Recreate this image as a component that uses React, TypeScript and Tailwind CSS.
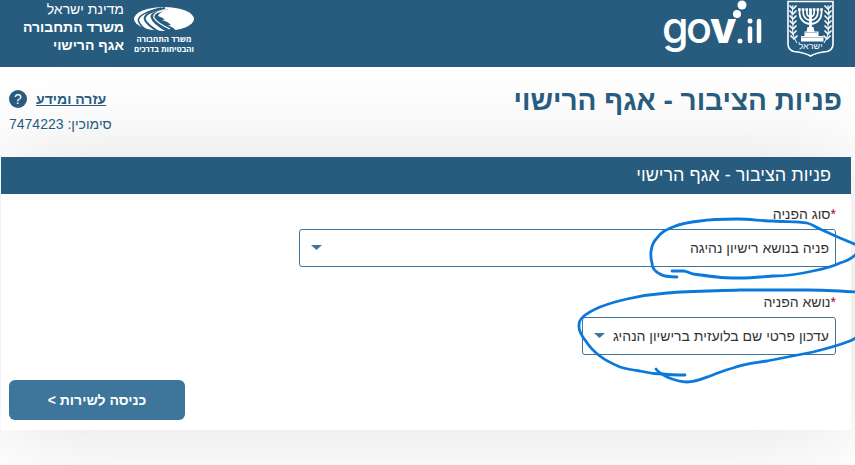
import { useState } from 'react';

type FieldProps = {
  id: string;
  label: string;
  options: string[];
  width: string;
};

function SelectField({ id, label, options, width }: FieldProps) {
  const [value, setValue] = useState(options[0]);

  return (
    <div className={`${width} max-w-full`}>
      <label htmlFor={id} className="block text-sm leading-5 text-[#333] mb-[5px]">
        <span className="text-[#b00020]">*</span>
        {label}
      </label>
      <div className="relative">
        <select
          id={id}
          value={value}
          onChange={(e) => setValue(e.target.value)}
          className="block w-full h-[38px] appearance-none rounded-[3px] border border-[#3d759b] bg-white ps-[6px] pe-7 text-sm text-[#333]"
        >
          {options.map((o) => (
            <option key={o}>{o}</option>
          ))}
        </select>
        <svg className="pointer-events-none absolute left-3 top-4 w-[11px] h-[5px] fill-[#3d759b]" viewBox="0 0 11 5">
          <path d="M0 0h11L5.5 5z" />
        </svg>
      </div>
    </div>
  );
}

function StateEmblem() {
  return (
    <svg className="w-[47px] h-[57px]" viewBox="0 0 47 57" fill="none" stroke="#fff" role="img" aria-label="סמל מדינת ישראל">
      <path d="M1 1.500H46V44Q46 50 40 51.500Q28 53 23.500 56Q19 53 7 51.500Q1 50 1 44Z" strokeWidth="1.600" />
      {/* menorah branches */}
      <g strokeWidth="1.700">
        <path d="M12.500 10V13a11 11 0 0 0 22 0V10" />
        <path d="M16.200 10V13a7.300 7.300 0 0 0 14.600 0V10" />
        <path d="M19.900 10V13a3.600 3.600 0 0 0 7.200 0V10" />
        <path d="M11 9.500H36" strokeWidth="2.400" strokeDasharray="2.700 1" />
      </g>
      <path d="M23.500 9V33" strokeWidth="2.800" />
      <path d="M20.500 27h6l1 4.500h4v4.500h5v5.500H14v-5.500h3.500v-4.500h2z" fill="#fff" stroke="none" />
      <path d="M14 37.500h22M18 32.500h12" stroke="#285c7f" strokeWidth=".4" />
      {/* olive branches */}
      <g strokeWidth="1">
        <path d="M10 43Q4 34 6 25Q4 16 6 5M37 43Q43 34 41 25Q43 16 41 5" />
        <path
          d="M6 9l-3-3M6 9l3-3M6 14l-3-3M6 14l3-3M6 19l-3-3M6 19l3-3M6 24l-3-3M6 24l3-3M6 29l-3-3M6 29l3-3M6 34l-3-3M6 34l3-3M7 39l-3-3M7 39l3-3M41 9l-3-3M41 9l3-3M41 14l-3-3M41 14l3-3M41 19l-3-3M41 19l3-3M41 24l-3-3M41 24l3-3M41 29l-3-3M41 29l3-3M41 34l-3-3M41 34l3-3M40 39l-3-3M40 39l3-3"
          strokeWidth="1.700"
          strokeLinecap="round"
        />
      </g>
      <text x="23.500" y="49" textAnchor="middle" fill="#fff" stroke="none" className="font-['Liberation_Sans'] text-[9px]">
        ישראל
      </text>
    </svg>
  );
}

function GovLogo() {
  return (
    <svg className="w-[100px] h-[57px]" viewBox="0 0 100 57" fill="#fff" direction="ltr" role="img" aria-label="gov.il">
      <text y="43" className="font-[Inter] text-[43px] font-medium">
        <tspan x="-1">g</tspan>
        <tspan x="23">o</tspan>
        <tspan x="47" className="font-extrabold">v</tspan>
      </text>
      <circle cx="74" cy="14" r="4" />
      <circle cx="79" cy="5" r="4.500" />
      <circle cx="77" cy="41" r="2.500" />
      <circle cx="87" cy="21" r="2.500" />
      <path d="M87 28.500V41M96 21V41" stroke="#fff" strokeWidth="4.500" strokeLinecap="round" />
    </svg>
  );
}

function MinistryLogo() {
  return (
    <div className="w-[60px] pt-[6px] text-white text-center font-['Open_Sans',sans-serif] font-bold whitespace-nowrap">
      <svg className="block w-[60px] h-[26px]" viewBox="0 0 60 26">
        <ellipse cx="30" cy="13" rx="30" ry="12" fill="#fff" />
        {/* road lanes */}
        <g fill="none" stroke="#285c7f">
          <path d="M27 2Q3 8 4.500 15Q6 20 15 26" strokeWidth="1.600" />
          <path d="M31 2Q8 7 11 14Q14 20 27 27" strokeWidth="1.900" />
        </g>
        <path
          d="M35 3Q16 5 16.500 11Q18 18 33 26L42 25Q40 21 34 19.500L37 19Q34 15.500 28 14L31 13.500Q28 11 24 10Q25 6 35 3Z"
          fill="#285c7f"
        />
        <path d="M33 4Q18 6 20 12Q23 17 36 23" fill="none" stroke="#fff" strokeWidth="1.300" />
      </svg>
      <div className="mt-[2px] text-[8px] leading-[10px]">משרד התחבורה</div>
      <div className="text-[8px] leading-[10px]">והבטיחות בדרכים</div>
    </div>
  );
}

// pen marks drawn round the two chosen values
function PenMarks() {
  return (
    <svg
      className="pointer-events-none absolute right-0 top-0 w-[285px] h-[400px]"
      viewBox="570 0 285 400"
      fill="none"
      stroke="#0b79dc"
      strokeWidth="2.800"
      strokeLinecap="round"
      strokeLinejoin="round"
      aria-hidden="true"
    >
      <path d="M677 277C667 277 663 276 660 274C654 271 652 267 652 263C650 256 650 245 657 238C661 232 666 230 673 227C680 224 690 222 700 221C712 219 725 219 737 219C750 219 762 221 773 221C785 222 798 221 807 223C812 224 815 227 820 229L840 238L857 245" />
      <path d="M857 253C853 258 847 261 840 263C832 267 823 269 813 271C800 274 786 276 773 276C762 277 751 278 740 278C732 278 724 278 717 277C708 276 701 275 693 274C689 273 687 271 683 271C679 271 675 271 672 271" />
      <path d="M857 292C840 291 824 290 807 290H740C715 291 691 291 667 293C653 294 640 296 627 299C617 301 608 304 600 307C593 310 587 313 583 317C579 320 579 323 579 327C579 332 582 336 585 340C589 346 594 352 600 356C606 361 613 364 620 367C626 369 633 370 640 371C648 373 656 374 663 374C671 375 679 375 685 375" />
      <path d="M656 369C659 373 663 375 667 377C674 380 680 382 687 382C695 382 702 379 710 376C718 373 725 370 733 368C744 364 755 363 767 361L813 352C825 349 837 346 847 342C851 341 854 339 857 337" />
    </svg>
  );
}

export default function App() {
  return (
    <div dir="rtl" className="relative min-h-screen overflow-hidden bg-white font-['Liberation_Sans',Arial,sans-serif] text-[#285c7f]">
      <header className="relative z-10 flex h-[67px] items-start justify-between bg-[#285c7f] pr-[21px] text-white">
        <div className="flex gap-6">
          <StateEmblem />
          <GovLogo />
        </div>
        <div className="flex flex-1 justify-end gap-[10px]">
          <MinistryLogo />
          <div className="w-[124px] text-sm leading-[18px]">
            <div>מדינת ישראל</div>
            <div className="font-bold">משרד התחבורה</div>
            <div className="font-bold">אגף הרישוי</div>
          </div>
        </div>
      </header>

      <main className="pr-1 pl-px">
        <div className="relative z-10 flex h-[90px] items-start justify-between pr-[9px] pl-2 pt-4">
          <h1 className="text-[28px] font-bold leading-9">פניות הציבור - אגף הרישוי</h1>
          <div className="flex flex-col items-end gap-[5px] pt-[6px] text-sm leading-5">
            <a href="#help" className="flex items-center gap-[9px] font-bold">
              <span className="underline">עזרה ומידע</span>
              <span className="flex size-[18px] items-center justify-center rounded-full bg-[#285c7f] font-normal text-white">?</span>
            </a>
            <p>סימוכין: 7474223</p>
          </div>
        </div>

        <section className="bg-white shadow-[0_0_100px_rgba(0,0,0,0.12)]">
          <h2 className="bg-[#285c7f] pr-5 text-lg leading-[37px] text-white">פניות הציבור - אגף הרישוי</h2>
          <form className="px-[15px] py-[10px]" onSubmit={(e) => e.preventDefault()}>
            <div className="flex flex-col gap-[25px]">
              <SelectField id="kind" label="סוג הפניה" options={['פניה בנושא רישיון נהיגה']} width="w-[537px]" />
              <SelectField id="subject" label="נושא הפניה" options={['עדכון פרטי שם בלועזית ברישיון הנהיג']} width="w-[254px]" />
            </div>
            <div className="-ml-[7px] mt-[25px] flex justify-end">
              <button type="submit" className="h-10 w-44 rounded-md bg-[#3d759b] text-sm font-bold text-white">
                כניסה לשירות &gt;
              </button>
            </div>
          </form>
        </section>
      </main>

      <PenMarks />
    </div>
  );
}
